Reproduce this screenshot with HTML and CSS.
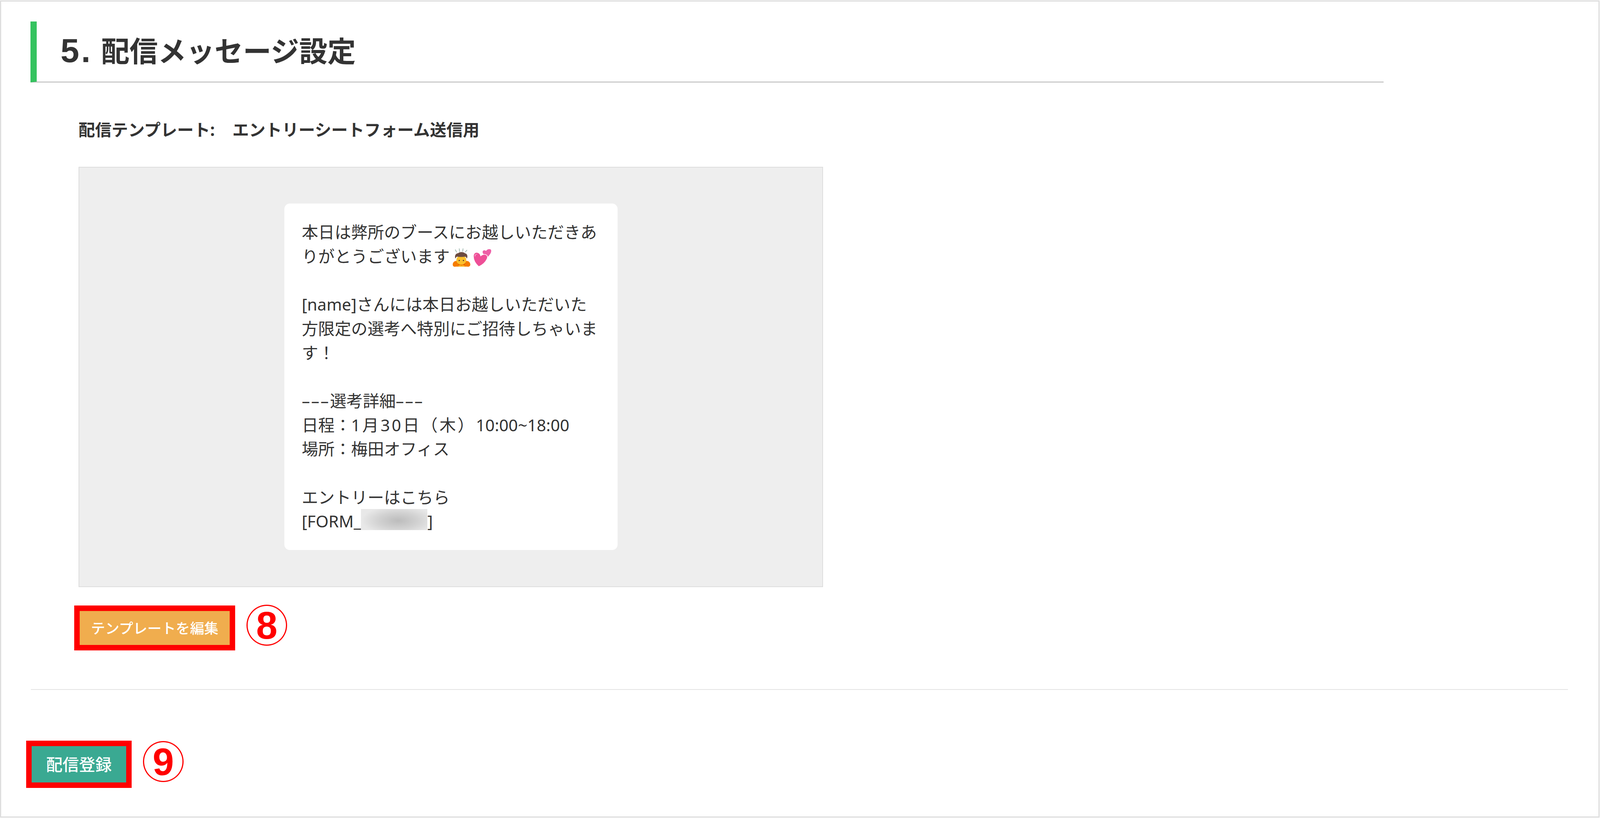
FILE: index.html
```html
<!DOCTYPE html>
<html lang="ja">
<head>
<meta charset="utf-8">
<title>配信メッセージ設定</title>
<link rel="stylesheet" href="styles.css">
</head>
<body>
<main class="page">
  <h2 class="section-title"><span class="section-num">5.</span>配信メッセージ設定</h2>
  <p class="template-name"><span class="template-label">配信テンプレート:</span><span>エントリーシートフォーム送信用</span></p>
  <div class="preview">
    <div class="bubble">
      <p class="message">本日は弊所のブースにお越しいただきあ<br>りがとうございます<svg class="emoji emoji-person" viewBox="0 0 46 48" aria-hidden="true"><path d="M7 3l3 6M17 0l1 8M27 0l-1 7M37 4l-4 5" stroke="#a5bdb5" stroke-width="2" stroke-linecap="round" fill="none"/><path d="M0 41C1 33 8 31 14 33L31 33C38 31 45 33 46 41C46 46 42 48 38 47L8 47C3 48 0 46 0 41Z" fill="#f57c00"/><path d="M12 35C18 42 28 42 34 35L31 42L15 42Z" fill="#d84f00"/><path d="M14 47C16 43 21 43 23 45C25 43 30 43 32 47Z" fill="#fbc02d"/><ellipse cx="22.500" cy="30" rx="13" ry="12" fill="#fbc02d"/><path d="M7 26C4 19 8 12 14 12C18 8 28 8 32 12C38 13 40 20 37 26C36 24 35 22 33 21C27 22 17 22 11 21C9 22 8 24 7 26Z" fill="#6d4c41"/><circle cx="17" cy="31" r="1.700" fill="#4e342e"/><circle cx="28" cy="31" r="1.700" fill="#4e342e"/></svg><svg class="emoji emoji-hearts" viewBox="0 0 48 48" aria-hidden="true"><path d="M38 22C32 18 25 14 25 9C25 4 30 3 34 6C36 2 42 0 46 2C49 5 47 11 44 15C42 18 40 20 38 22Z" fill="#ee5fa7"/><path d="M15 47C7 40 1 30 1 20C1 12 6 9 11 10C16 11 19 14 20 19C24 15 30 14 34 16C38 18 39 23 36 28C32 36 24 43 15 47Z" fill="#ee4f97" stroke="#fff" stroke-width="1.500"/><path d="M4 20C4 15 8 13 12 14C8 15 6 17 6 21Z" fill="#f8a5cb"/></svg><br>
<br>
[name]さんには本日お越しいただいた<br>方限定の選考へ特別にご招待しちゃいま<br>す！<br>
<br>
<span class="dashes">–––</span>選考詳細<span class="dashes">–––</span><br>
日程：<span class="date">1月30日（木）</span>10:00~18:00<br>
場所：梅田オフィス<br>
<br>
エントリーはこちら<br>
[FORM_<span class="redacted"></span>]</p>
    </div>
  </div>
  <div class="action action-edit">
    <div class="callout"><button class="btn btn-edit" type="button">テンプレートを編集</button></div>
    <span class="marker marker-edit">8</span>
  </div>
  <hr class="divider">
  <div class="action action-submit">
    <div class="callout"><button class="btn btn-submit" type="button">配信登録</button></div>
    <span class="marker marker-submit">9</span>
  </div>
</main>
</body>
</html>
```
FILE: styles.css
```css
* { box-sizing: border-box; }
html, body { margin: 0; padding: 0; background: #fff; }
body {
  font-family: "Noto Sans", "Noto Sans CJK JP", sans-serif;
  color: #333;
}
.page {
  margin: 1px 1px 1px 0;
  height: 2092px;
  border: 3px solid #dedede;
  padding-top: 51px;
  overflow: hidden;
}
.section-title {
  margin: 0 0 0 75px;
  width: 3464px;
  height: 156px;
  padding: 0 0 0 61px;
  border-left: 16px solid #35c35f;
  border-bottom: 2px solid #b4b4b4;
  font-size: 72.6px;
  font-weight: 700;
  line-height: 148px;
  white-space: nowrap;
}
.section-num {
  display: inline-block;
  width: 104px;
  font-family: "Liberation Sans", Arial, sans-serif;
  font-size: 86px;
  vertical-align: -1px;
  letter-spacing: 5px;
}
.template-name {
  margin: 92px 0 0 198px;
  display: flex;
  font-size: 42.3px;
  font-weight: 700;
  line-height: 58px;
  height: 60px;
  white-space: nowrap;
}
.template-label { width: 394px; }
.preview {
  margin: 64px 0 0 198px;
  width: 1906px;
  height: 1076px;
  padding-top: 92px;
  display: flex;
  justify-content: center;
  align-items: flex-start;
  background: #eee;
  border: 2px solid #ddd;
}
.bubble {
  width: 853px;
  height: 887px;
  padding: 42px 45px;
  background: #fff;
  border-radius: 14px;
}
.message {
  margin: 0;
  font-size: 42.1px;
  line-height: 61.7px;
  white-space: nowrap;
}
.dashes { letter-spacing: 3px; }
.date { letter-spacing: 4.6px; }
.emoji { vertical-align: -12px; }
.emoji-person { width: 45px; height: 48px; margin-left: 8px; }
.emoji-hearts { width: 47px; height: 48px; margin-left: 7px; }
.redacted {
  display: inline-block;
  width: 170px;
  height: 54px;
  vertical-align: top;
  background: radial-gradient(ellipse 55% 70% at 56% 55%, #bcbcbc 0%, #d2d2d2 55%, #e8e8e8 100%);
}
.action { display: flex; align-items: flex-start; gap: 29px; }
.action-edit { margin: 47px 0 0 187px; }
.action-submit { margin: 130px 0 0 64px; }
.callout { border: 14px solid #f00; }
.btn {
  display: block;
  margin: 0;
  padding: 0;
  border: 0;
  color: #fff;
  font-family: inherit;
  font-weight: 500;
  line-height: 1;
  text-align: center;
  cursor: pointer;
}
.btn-edit {
  width: 384px;
  height: 87px;
  font-size: 36.4px;
  background: #f0ad4e;
  border-top: 1px solid #e6a23c;
}
.btn-submit {
  width: 242px;
  height: 93px;
  font-size: 42px;
  background: #3aa992;
}
.marker {
  width: 104px;
  height: 105px;
  display: flex;
  align-items: center;
  justify-content: center;
  border: 3px solid #f00;
  border-radius: 50%;
  color: #f00;
  font-family: "Liberation Sans", Arial, sans-serif;
  font-size: 98px;
  font-weight: 700;
  line-height: 1;
}
.marker-edit { margin-top: -2px; }
.marker-submit { margin-top: 1px; }
.divider {
  margin: 99px 0 0 76px;
  width: 3935px;
  height: 2px;
  border: 0;
  background: #e4e4e4;
}
```
